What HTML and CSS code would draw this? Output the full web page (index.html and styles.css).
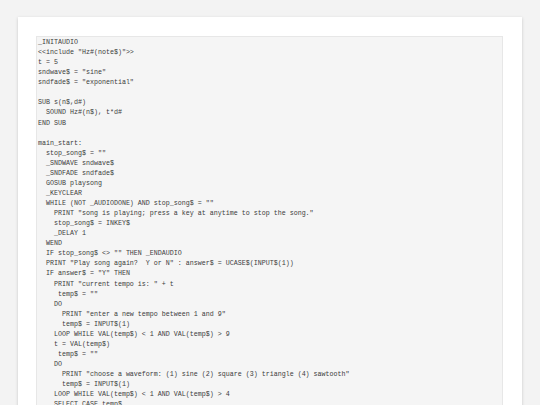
FILE: index.html
```html
<!DOCTYPE html>
<html>
<head>
<meta charset="utf-8">
<link rel="stylesheet" href="styles.css">
</head>
<body>
<div class="card">
<pre class="code">_INITAUDIO
&lt;&lt;include "Hz#(note$)"&gt;&gt;
t = 5
sndwave$ = "sine"
sndfade$ = "exponential"

SUB s(n$,d#)
  SOUND Hz#(n$), t*d#
END SUB

main_start:
  stop_song$ = ""
  _SNDWAVE sndwave$
  _SNDFADE sndfade$
  GOSUB playsong
  _KEYCLEAR
  WHILE (NOT _AUDIODONE) AND stop_song$ = ""
    PRINT "song is playing; press a key at anytime to stop the song."
    stop_song$ = INKEY$
    _DELAY 1
  WEND
  IF stop_song$ &lt;&gt; "" THEN _ENDAUDIO
  PRINT "Play song again?  Y or N" : answer$ = UCASE$(INPUT$(1))
  IF answer$ = "Y" THEN
    PRINT "current tempo is: " + t
     temp$ = ""
    DO
      PRINT "enter a new tempo between 1 and 9"
      temp$ = INPUT$(1)
    LOOP WHILE VAL(temp$) &lt; 1 AND VAL(temp$) &gt; 9
    t = VAL(temp$)
     temp$ = ""
    DO
      PRINT "choose a waveform: (1) sine (2) square (3) triangle (4) sawtooth"
      temp$ = INPUT$(1)
    LOOP WHILE VAL(temp$) &lt; 1 AND VAL(temp$) &gt; 4
    SELECT CASE temp$</pre>
</div>
</body>
</html>
```

FILE: styles.css
```css
html, body {
  margin: 0;
  padding: 0;
  background: #f3f3f3;
  height: 405px;
  overflow: hidden;
}
body {
  padding: 17px 18px 0 18px;
  box-sizing: border-box;
}
.card {
  width: 504px;
  height: 420px;
  background: #ffffff;
  box-sizing: border-box;
  padding: 19px 19px 0 18px;
  box-shadow: 0 1px 3px rgba(0, 0, 0, 0.18);
}
.code {
  margin: 0;
  padding: 0 1px;
  background: #f5f5f5;
  border: 1px solid #e7e7e7;
  font-family: "Liberation Mono", monospace;
  font-size: 6.67px;
  line-height: 10.07px;
  color: #3c3c3c;
  white-space: pre;
  overflow: hidden;
  height: 420px;
}
```
